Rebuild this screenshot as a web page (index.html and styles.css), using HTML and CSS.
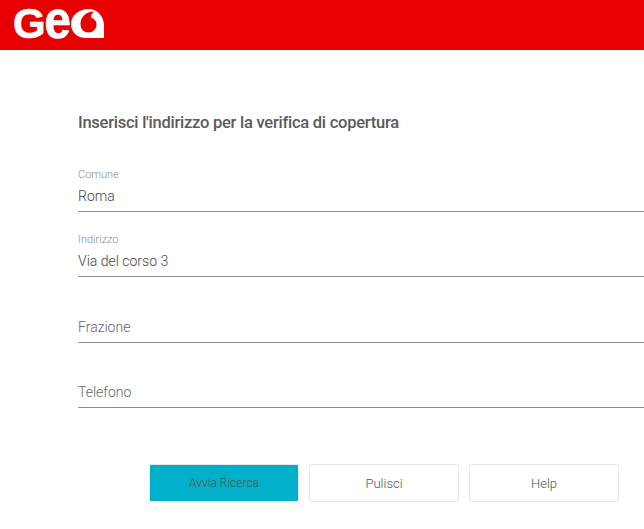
FILE: index.html
```html
<!DOCTYPE html>
<html>
<head>
    <title>Verifica copertura</title>
    <meta charset="UTF-8">
    <link rel="stylesheet" href="styles.css">
</head>
<body>
    <!-- Header -->
    <header class="top-bar">
        <div class="logo">
            <span class="logo-g">G</span><span class="logo-e">e</span>
            <svg class="logo-mark" width="33" height="29" viewBox="0 0 33 29">
                <path fill="#fff" d="M18 0C7 0 0 7 0 15c0 8 6 14 15 14h18V17C33 8 27 0 18 0z"/>
                <path fill="#e60000" d="M23 2.500C15 2.500 9.500 8 9.500 15c0 5 3.500 8.500 8 8.500s8-3.500 8-8c0-4-3-6-5.500-7 0-2.500 1-4.500 3-6z"/>
            </svg>
        </div>
    </header>

    <!-- Form -->
    <main class="search-form">
        <h1 class="form-title">Inserisci l'indirizzo per la verifica di copertura</h1>

        <div class="field">
            <span class="field-label">Comune</span>
            <span class="field-value">Roma</span>
        </div>
        <div class="field">
            <span class="field-label">Indirizzo</span>
            <span class="field-value">Via del corso 3</span>
        </div>
        <div class="field field-tall">
            <span class="field-value placeholder">Frazione</span>
        </div>
        <div class="field">
            <span class="field-value placeholder">Telefono</span>
        </div>

        <div class="actions">
            <button class="btn btn-primary">Avvia Ricerca</button>
            <button class="btn">Pulisci</button>
            <button class="btn">Help</button>
        </div>
    </main>
</body>
</html>
```

FILE: styles.css
```css
body {
    margin: 0;
    background-color: #fff;
    font-family: Roboto, "Open Sans", sans-serif;
    color: #555;
    overflow: hidden;
}
.top-bar {
    height: 50px;
    background-color: #e60000;
    padding: 7px 0 0 13px;
    box-sizing: border-box;
}
.logo {
    display: flex;
    align-items: baseline;
    line-height: 29px;
    color: #fff;
    font-family: "Liberation Sans", sans-serif;
    font-weight: 700;
    -webkit-text-stroke: .6px #fff;
}
.logo-g {
    font-size: 42px;
    margin-right: -1.500px;
}
.logo-e {
    font-size: 48px;
    transform: scaleY(1.1);
    transform-origin: 50% 31px;
}
.logo-mark {
    display: block;
}
.search-form {
    padding: 62px 0 0 78px;
}
.form-title {
    margin: 0 0 13px;
    font-size: 16.500px;
    line-height: 22px;
    font-weight: 500;
    letter-spacing: -.25px;
    color: #5a5a5a;
}
.field {
    height: 58px;
    border-bottom: 1px solid #8c8c8c;
    display: flex;
    flex-direction: column;
    justify-content: flex-end;
    padding-bottom: 6px;
}
.field-tall {
    height: 59px;
}
.field-label {
    font-size: 11px;
    line-height: 14px;
    font-weight: 300;
    color: #8a8a8a;
    margin-bottom: 5px;
}
.field-value {
    font-size: 14px;
    line-height: 18px;
    font-weight: 300;
    color: #444;
}
.field-value.placeholder {
    color: #666;
}
.actions {
    display: flex;
    gap: 10px;
    margin: 56px 0 0 71px;
}
.btn {
    width: 150px;
    height: 38px;
    border: 1px solid #e8e8e8;
    border-radius: 2px;
    background-color: #fff;
    font-family: Roboto, sans-serif;
    font-size: 13px;
    font-weight: 300;
    color: #555;
    padding: 0;
}
.btn-primary {
    background-color: #00b0ca;
    font-size: 12px;
}
```
